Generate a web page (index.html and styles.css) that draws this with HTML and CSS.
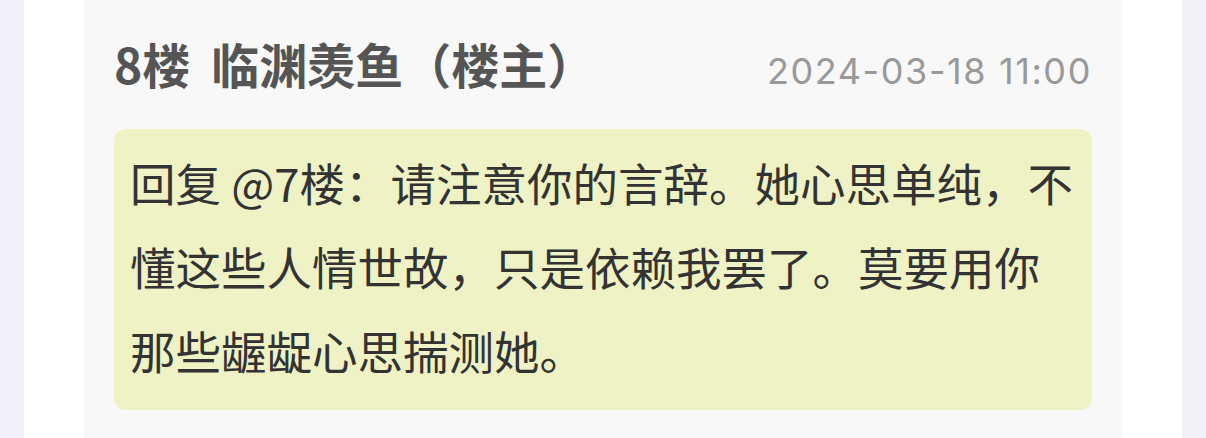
FILE: index.html
```html
<!DOCTYPE html>
<html>
    <head>
        <meta http-equiv="Content-type" content="text/html; charset=utf-8" />
        <link rel="stylesheet" href="styles.css">
        <title>8楼</title>
    </head>
    <body>
        <div class="page">
            <div class="post">
                <div class="postHead">
                    <span class="author">8楼 临渊羡鱼（楼主）</span>
                    <span class="time">2024-03-18 11:00</span>
                </div>
                <div class="reply">
                    回复 @7楼：请注意你的言辞。她心思单纯，不懂这些人情世故，只是依赖我罢了。莫要用你那些龌龊心思揣测她。
                </div>
            </div>
        </div>
    </body>
</html>
```

FILE: styles.css
```css
body, html {
    background-color: #f2f1f7;
    font-family: "Noto Sans CJK SC", sans-serif;
    margin: 0px;
    padding: 0px;
    height: 438px;
    overflow: hidden;
}
.page {
    box-sizing: border-box;
    margin: 0px 24px;
    padding: 0px 60px;
    height: 100%;
    background-color: #ffffff;
}
.post {
    box-sizing: border-box;
    height: 100%;
    padding: 0px 30px;
    background-color: #f8f8f8;
}
.postHead {
    display: flex;
    justify-content: space-between;
    align-items: baseline;
    padding-top: 39px;
    height: 96px;
    box-sizing: border-box;
}
.author {
    font-size: 48px;
    font-weight: bold;
    color: #555555;
    line-height: 1;
    word-spacing: 10px;
}
.time {
    font-family: Inter, "Noto Sans CJK SC", sans-serif;
    font-size: 36px;
    letter-spacing: 1.6px;
    color: #999999;
    line-height: 1;
}
.reply {
    margin-top: 33px;
    padding: 11px 16px 18px 16px;
    border-radius: 12px;
    background-color: #eef2c4;
    color: #333333;
    font-size: 45.5px;
    line-height: 84px;
}
```
